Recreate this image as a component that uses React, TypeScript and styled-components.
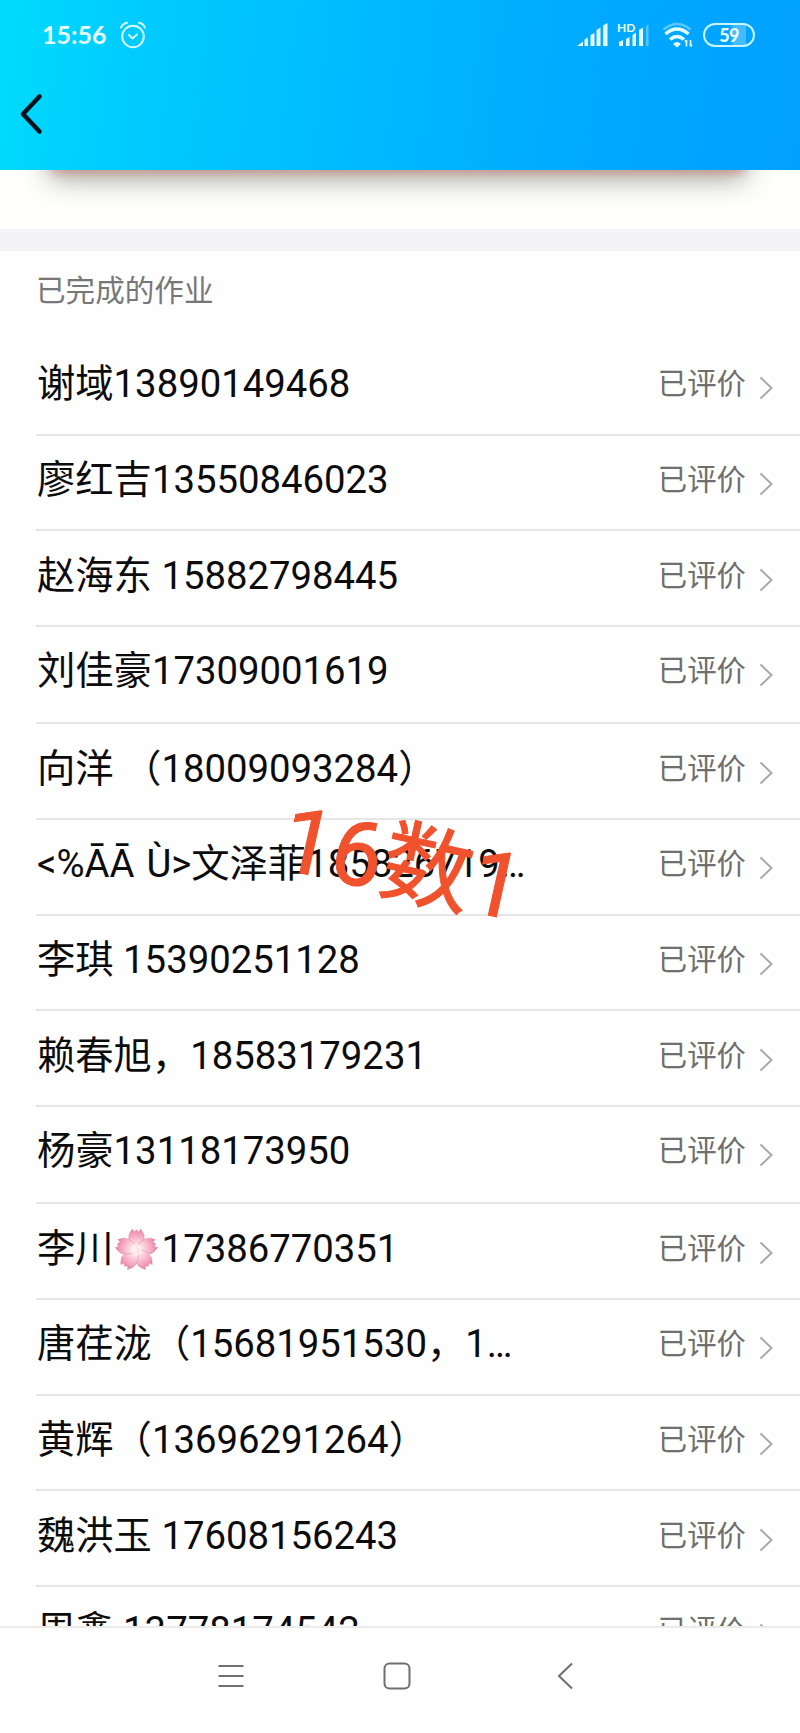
import React from 'react';
import styled, { createGlobalStyle } from 'styled-components';

const GlobalStyle = createGlobalStyle`
  * { box-sizing: border-box; }
  body { margin: 0; background: #fefefe; }
`;

const Screen = styled.div`
  display: flex;
  flex-direction: column;
  width: 800px;
  height: 1733px;
  overflow: hidden;
  background: #fefefe;
  font-family: Roboto, 'Noto Sans CJK SC', sans-serif;
`;

const Header = styled.header`
  flex: none;
  height: 170px;
  background: linear-gradient(97deg, #00dcfc 0%, #00ccff 16%, #00bbff 44%, #00abff 70%, #00a0ff 100%);
`;

const StatusBar = styled.div`
  display: flex;
  align-items: center;
  height: 70px;
  padding: 0 45px 0 42px;
  color: #e9fdff;
`;

const Clock = styled.span`
  width: 66px;
  padding-bottom: 2px;
  font: 700 25px/30px Lato, sans-serif;
`;

const AlarmSlot = styled.span`
  display: flex;
  margin-left: 11px;
`;

const StatusIcons = styled.div`
  display: flex;
  align-items: center;
  margin-left: auto;
`;

const WifiSlot = styled.span`
  display: flex;
  margin: 2px 9px 0 12px;
`;

const Battery = styled.span`
  display: flex;
  align-items: center;
  justify-content: center;
  width: 52px;
  height: 24px;
  border: 2.5px solid #c9f5ff;
  border-radius: 12px;
  background: linear-gradient(90deg, transparent 0 50%, #45bcff 62% 86%, transparent 86%);
  font: 900 18px/20px Lato, sans-serif;
  letter-spacing: -0.6px;
`;

const TitleBar = styled.div`
  display: flex;
  align-items: center;
  height: 88px;
  padding-left: 19px;
`;

const CardEdge = styled.div`
  flex: none;
  height: 59px;
  overflow: hidden;
  background: #fffffd;
`;

const HiddenCard = styled.div`
  height: 30px;
  margin: -32px 58px 0 54px;
  box-shadow: 0 3px 8px 2px rgba(214, 130, 120, 0.6), 0 6px 28px 4px rgba(60, 70, 55, 0.5);
`;

const Band = styled.div`
  flex: none;
  height: 22px;
  background: #f4f4f8;
`;

const SectionTitle = styled.h2`
  flex: none;
  height: 89px;
  margin: 0;
  padding: 18px 0 0 36px;
  color: #777;
  font-size: 29.6px;
  font-weight: 400;
  line-height: 44px;
`;

const List = styled.ul`
  position: relative;
  flex: none;
  height: 1286px;
  margin: 0;
  padding: 0 0 0 36px;
  overflow: hidden;
  list-style: none;
`;

const Row = styled.li<{ $tall?: boolean }>`
  display: flex;
  align-items: center;
  height: ${({ $tall }) => ($tall ? 97.2 : 95.7)}px;
  padding: 0 27px ${({ $tall }) => ($tall ? 7 : 5)}px 1px;
  border-bottom: 2px solid #e6e6e6;
`;

const Name = styled.span<{ $wordGap?: number }>`
  display: flex;
  flex: 1;
  align-items: center;
  color: #0c0c0c;
  font-size: 38.3px;
  line-height: 50px;
  white-space: pre;
  word-spacing: ${({ $wordGap = 0 }) => $wordGap}px;
`;

const Status = styled.span`
  margin-right: 13px;
  color: #6e6e6e;
  font-size: 29.4px;
  line-height: 44px;
`;

const ChevronSlot = styled.span`
  display: flex;
  padding-top: 8px;
`;

const Annotation = styled.span`
  position: absolute;
  left: 280px;
  top: 474px;
  color: #f0522d;
  font-size: 91px;
  font-weight: 400;
  -webkit-text-stroke: 1px #f0522d;
  line-height: 100px;
  white-space: nowrap;
  transform: rotate(12.6deg);
`;

const NavBar = styled.nav`
  display: flex;
  flex: none;
  align-items: center;
  height: 107px;
  padding: 0 226px 9px 218px;
  border-top: 2px solid #ebebeb;
`;

const HomeSlot = styled.span`
  display: flex;
  margin: 0 auto 0 139px;
`;

const BlossomSlot = styled.span`
  display: flex;
  padding: 3px 4px 0 1px;
`;

const Blossom = () => (
  <BlossomSlot>
    <svg width="43" height="44" viewBox="-21.5 -22 43 44">
      <defs>
        <radialGradient id="petal" gradientUnits="userSpaceOnUse" cx="0" cy="0" r="21">
          <stop offset="0" stopColor="#fff6f4" />
          <stop offset="0.4" stopColor="#fad0dc" />
          <stop offset="0.8" stopColor="#f29cb9" />
          <stop offset="1" stopColor="#e0809f" />
        </radialGradient>
      </defs>
      {[0, 72, 144, 216, 288].map((a) => (
        <path
          key={a}
          d="M0 2 C-6 -3 -9 -11 -7.2 -16 L-4.2 -21 L-2.5 -18 L0 -20 L2.5 -18 L4.2 -21 L7.2 -16 C9 -11 6 -3 0 2Z"
          transform={`rotate(${a})`}
          fill="url(#petal)"
          stroke="#dc8ba4"
          strokeWidth="0.5"
        />
      ))}
      <circle r="6" fill="#fff1f0" opacity="0.7" />
    </svg>
  </BlossomSlot>
);

const Alarm = () => (
  <svg width="28" height="28" viewBox="0 0 28 28" fill="none" stroke="#d8fbff" strokeWidth="2" strokeLinecap="round">
    <circle cx="14" cy="15.5" r="10.8" />
    <path d="M10 14 L13.5 17.5 L18 13.5M2 6.5 Q4 2.5 8 1.8M20 1.8 Q24 2.5 26 6.5" />
  </svg>
);

const Signals = () => (
  <svg width="74" height="30" viewBox="0 -2 74 30" fill="#e4fbff">
    <path d="M1 24 L7 19.5 V24ZM8.5 24 V17.5 L12 15.5 V24ZM14.5 24 V13 L18.5 11 V24ZM20.5 24 V8 L24.500 5.5 V24ZM27 24 V3.5 L31.500 1 V24Z" />
    <path d="M43 24 V20 L47 18 V24ZM50 24 V17 L53.5 15 V24ZM56.5 24 V13 L60 10.5 V24ZM63 24 V8 L67 5.5 V24Z" />
    <path d="M70 24 V4 L72.5 2.5 V24Z" opacity="0.35" />
    <text x="41" y="9.5" fontFamily="Lato, sans-serif" fontSize="12" fontWeight="700">HD</text>
  </svg>
);

const Wifi = () => (
  <svg width="32" height="28" viewBox="0 0 32 28" fill="none" stroke="#e4fbff">
    <path d="M1.5 7.5 Q15 -3.5 28.5 7.5" opacity="0.4" strokeWidth="2.5" />
    <path d="M3.5 12 Q15 2 26.5 12M8 17.5 Q15 11.5 22 17.5" strokeWidth="3.5" />
    <path d="M11 22 Q15 18 19 22 L15 25.5Z" fill="#e4fbff" stroke="none" />
    <path d="M24.5 18 V24.5M23 20 L24.5 18M28.5 18 V24.5M30 22.5 L28.5 24.5" strokeWidth="1.7" />
  </svg>
);

const Chevron = () => (
  <svg width="14" height="24" viewBox="0 0 14 24" fill="none" stroke="#a8a8a8" strokeWidth="2">
    <path d="M1.5 1.5 L12.5 12 L1.5 22.5" />
  </svg>
);

type Entry = { name: React.ReactNode; tall?: boolean; wordGap?: number };

const entries: Entry[] = [
  { name: '谢域13890149468' },
  { name: '廖红吉13550846023' },
  { name: '赵海东 15882798445' },
  { name: '刘佳豪17309001619', tall: true },
  { name: '向洋 （18009093284）' },
  { name: '<%ĀĀ Ù>文泽菲185826719…', wordGap: 2.4 },
  { name: '李琪 15390251128' },
  { name: '赖春旭，18583179231' },
  { name: '杨豪13118173950', tall: true },
  { name: <>李川<Blossom />17386770351</> },
  { name: '唐荏泷（15681951530，1…' },
  { name: '黄辉（13696291264）' },
  { name: '魏洪玉 17608156243' },
  { name: '周鑫 13778174542' },
];

export default function App() {
  return (
    <Screen>
      <GlobalStyle />
      <Header>
        <StatusBar>
          <Clock>15:56</Clock>
          <AlarmSlot><Alarm /></AlarmSlot>
          <StatusIcons>
            <Signals />
            <WifiSlot><Wifi /></WifiSlot>
            <Battery>59</Battery>
          </StatusIcons>
        </StatusBar>
        <TitleBar>
          <svg width="24" height="42" viewBox="0 0 24 42" fill="none" stroke="#06121c" strokeWidth="4.6" strokeLinecap="round" strokeLinejoin="round">
            <path d="M20.5 3.5 L4 21 L20.5 38.5" />
          </svg>
        </TitleBar>
      </Header>
      <CardEdge><HiddenCard /></CardEdge>
      <Band />
      <SectionTitle>已完成的作业</SectionTitle>
      <List>
        {entries.map(({ name, tall, wordGap }, i) => (
          <Row key={i} $tall={tall}>
            <Name $wordGap={wordGap}>{name}</Name>
            <Status>已评价</Status>
            <ChevronSlot><Chevron /></ChevronSlot>
          </Row>
        ))}
        <Annotation>16数1</Annotation>
      </List>
      <NavBar>
        <svg width="26" height="24" viewBox="0 0 26 24" stroke="#6f6f6f" strokeWidth="2">
          <path d="M0.5 2 H25.5M0.5 12 H25.5M0.5 22 H25.5" />
        </svg>
        <HomeSlot>
          <svg width="28" height="28" viewBox="0 0 28 28" fill="none" stroke="#6f6f6f" strokeWidth="2">
            <rect x="1.5" y="1.5" width="25" height="25" rx="5" />
          </svg>
        </HomeSlot>
        <svg width="17" height="28" viewBox="0 0 17 28" fill="none" stroke="#6f6f6f" strokeWidth="2">
          <path d="M15 1.5 L2 14 L15 26.5" />
        </svg>
      </NavBar>
    </Screen>
  );
}
